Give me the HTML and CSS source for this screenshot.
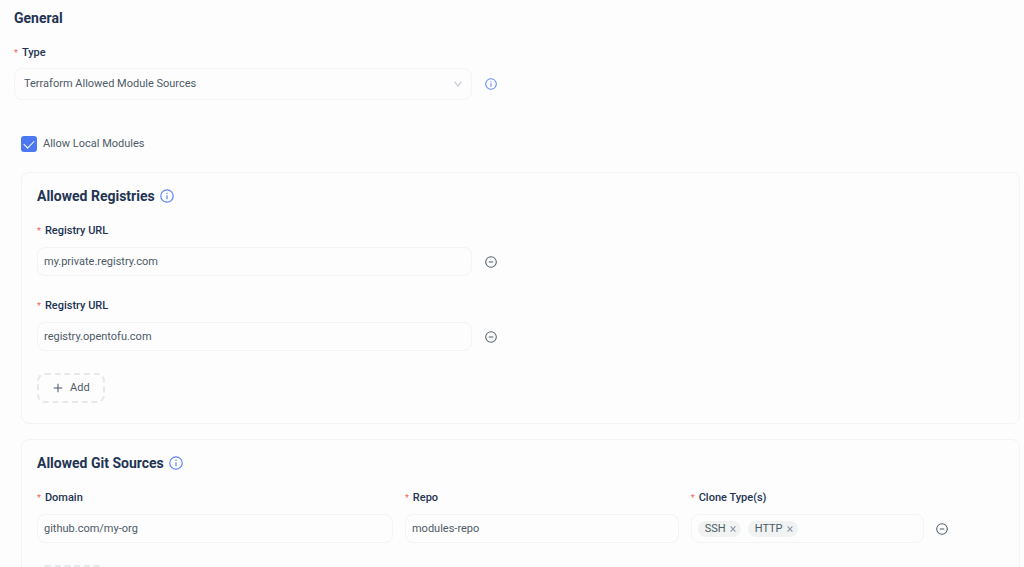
FILE: index.html
```html
<!DOCTYPE html>
<html lang="en">

<head>
    <meta charset="UTF-8">
    <meta name="viewport" content="width=device-width, initial-scale=1.0">
    <title>General</title>
    <link rel="stylesheet" href="styles.css">
</head>

<body>
    <svg class="sprite" aria-hidden="true">
        <symbol id="info" viewBox="0 0 14 14">
            <circle cx="7" cy="7" r="6.2" />
            <path d="M7 6.2v4M7 3.8v1.1" />
        </symbol>
        <symbol id="minus" viewBox="0 0 14 14">
            <circle cx="7" cy="7" r="6.2" />
            <path d="M4.4 7h5.2" />
        </symbol>
        <symbol id="plus" viewBox="0 0 14 14">
            <path d="M7 2v10M2 7h10" />
        </symbol>
        <symbol id="close" viewBox="0 0 8 8">
            <path d="M1.6 1.4l4.8 5.2M6.4 1.4l-4.8 5.2" />
        </symbol>
        <symbol id="chevron" viewBox="0 0 10 10">
            <path d="M1.6 2.6L5 7.2l3.4-4.6" />
        </symbol>
    </svg>

    <form class="policy">
        <h2 class="title">General</h2>
        <label class="label" for="type">Type</label>
        <div class="row">
            <div class="select">
                <select id="type">
                    <option>Terraform Allowed Module Sources</option>
                </select>
                <svg class="icon chevron"><use href="#chevron" /></svg>
            </div>
            <button class="icon-button info" type="button" aria-label="About type">
                <svg class="icon"><use href="#info" /></svg>
            </button>
        </div>

        <label class="check">
            <input type="checkbox" checked>
            Allow Local Modules
        </label>

        <section class="panel">
            <h2 class="title">
                Allowed Registries
                <svg class="icon info big"><use href="#info" /></svg>
            </h2>
            <div class="field">
                <label class="label" for="registry-1">Registry URL</label>
                <div class="row">
                    <input class="box registry" id="registry-1" type="text" value="my.private.registry.com">
                    <button class="icon-button" type="button" aria-label="Remove registry">
                        <svg class="icon"><use href="#minus" /></svg>
                    </button>
                </div>
            </div>
            <div class="field">
                <label class="label" for="registry-2">Registry URL</label>
                <div class="row">
                    <input class="box registry" id="registry-2" type="text" value="registry.opentofu.com">
                    <button class="icon-button" type="button" aria-label="Remove registry">
                        <svg class="icon"><use href="#minus" /></svg>
                    </button>
                </div>
            </div>
            <button class="add" type="button">
                <svg class="icon"><use href="#plus" /></svg>
                Add
            </button>
        </section>

        <section class="panel">
            <h2 class="title">
                Allowed Git Sources
                <svg class="icon info big"><use href="#info" /></svg>
            </h2>
            <div class="field sources">
                <div>
                    <label class="label" for="domain">Domain</label>
                    <input class="box" id="domain" type="text" value="github.com/my-org">
                </div>
                <div>
                    <label class="label" for="repo">Repo</label>
                    <input class="box" id="repo" type="text" value="modules-repo">
                </div>
                <div>
                    <label class="label" for="clone">Clone Type(s)</label>
                    <div class="box tags">
                        <span class="tag">SSH
                            <button type="button" aria-label="Remove SSH"><svg class="icon"><use href="#close" /></svg></button>
                        </span>
                        <span class="tag">HTTP
                            <button type="button" aria-label="Remove HTTP"><svg class="icon"><use href="#close" /></svg></button>
                        </span>
                        <input id="clone" type="text">
                    </div>
                </div>
                <button class="icon-button" type="button" aria-label="Remove source">
                    <svg class="icon"><use href="#minus" /></svg>
                </button>
            </div>
            <button class="add" type="button">
                <svg class="icon"><use href="#plus" /></svg>
                Add
            </button>
        </section>
    </form>
</body>

</html>
```

FILE: styles.css
```css
* {
    box-sizing: border-box;
}

body {
    margin: 0;
    background-color: #fdfdfe;
    font-family: Roboto, sans-serif;
    font-size: 11px;
    line-height: 16px;
    color: #4d5b66;
}

input, select, button {
    font: inherit;
    color: inherit;
}

button {
    display: flex;
    align-items: center;
    padding: 0;
    border: 0;
    background: none;
}

.sprite {
    display: none;
}

.icon {
    width: 12px;
    height: 12px;
    flex: none;
    fill: none;
    stroke: currentColor;
    stroke-width: 1.2;
}

.info {
    color: #5f86f2;
}

.big {
    width: 14px;
    height: 14px;
}

.policy {
    padding: 8px 4px 16px 14px;
}

.title {
    display: flex;
    align-items: center;
    gap: 5px;
    margin: 0 0 16px;
    font-size: 14px;
    line-height: 20px;
    font-weight: 700;
    color: #233453;
}

.label {
    display: block;
    margin-bottom: 6px;
    line-height: 18px;
    font-weight: 500;
    color: #233453;
}

.label::before {
    content: "*";
    margin-right: 4px;
    font-size: 9px;
    line-height: 1;
    font-weight: 400;
    color: #f5605c;
}

.row {
    display: flex;
    align-items: center;
    gap: 13px;
}

.box, .select select {
    width: 100%;
    height: 29px;
    padding: 0 6px;
    border: 1px solid #f3f4f6;
    border-radius: 8px;
    background: none;
}

.box.registry {
    width: 45%;
}

.select {
    position: relative;
    width: 45.5%;
}

.select select {
    display: block;
    height: 32px;
    padding: 0 9px;
    appearance: none;
}

.chevron {
    position: absolute;
    top: 11px;
    right: 9px;
    width: 10px;
    height: 10px;
    color: #c9ced6;
    pointer-events: none;
}

.icon-button {
    width: 12px;
    height: 28px;
}

.check {
    display: flex;
    align-items: center;
    gap: 6px;
    margin: 35px 0 19px 7px;
    line-height: 18px;
}

.check input {
    display: grid;
    place-items: center;
    width: 16px;
    height: 16px;
    margin: 0;
    appearance: none;
    border-radius: 3px;
    background-color: #4b78f0;
}

.check input:checked::before {
    content: "";
    width: 9px;
    height: 5px;
    margin-bottom: 3px;
    border-left: 1px solid white;
    border-bottom: 1px solid white;
    transform: rotate(-45deg);
}

.panel {
    margin: 0 0 15px 7px;
    padding: 13px 15px 20px;
    border: 1px solid #f3f4f6;
    border-radius: 8px;
}

.field {
    margin-bottom: 21px;
}

.field .label {
    margin-bottom: 7px;
}

.sources {
    display: grid;
    grid-template-columns: minmax(0, 26fr) minmax(0, 20fr) minmax(0, 17fr) minmax(0, 5fr);
    column-gap: 12px;
    align-items: end;
}

.tags {
    display: flex;
    align-items: center;
    gap: 7px;
}

.tags input {
    flex: 1;
    min-width: 0;
    border: 0;
    background: none;
    outline: none;
}

.tag {
    display: flex;
    align-items: center;
    gap: 3px;
    padding: 0 4px 0 7px;
    border-radius: 8px;
    background-color: #f1f3f3;
}

.tag .icon {
    width: 8px;
    height: 8px;
    color: #8c98a8;
}

.add {
    gap: 6px;
    height: 30px;
    margin-top: 22px;
    padding: 0 13px;
    border: 2px dashed #e6e8ec;
    border-radius: 8px;
}
```
